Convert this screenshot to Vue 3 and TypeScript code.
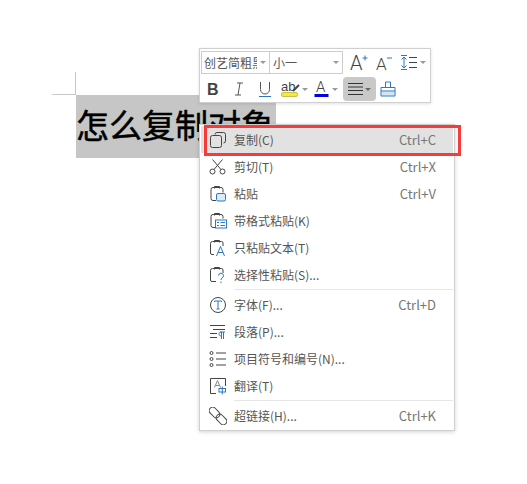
<template>
  <div class="page">
    <div class="crop-mark"></div>
    <h1 class="doc-title">怎么复制对象</h1>

    <div class="toolbar">
      <div class="tool-row">
        <div class="combo">
          <div class="combo-cell font-cell">
            <span class="combo-text font-name">创艺简粗黑</span>
            <i class="caret"></i>
          </div>
          <div class="combo-cell size-cell">
            <span class="combo-text">小一</span>
            <i class="caret"></i>
          </div>
        </div>
        <svg class="tb-icon grow" width="20" height="22" viewBox="0 0 20 22">
          <text x="1" y="18" class="glyph light" font-size="20">A</text>
          <path d="M13.500 6h5M16 3.500v5" stroke="#2a78c4" stroke-width="1" fill="none" />
        </svg>
        <svg class="tb-icon shrink" width="20" height="22" viewBox="0 0 20 22">
          <text x="1" y="18" class="glyph light" font-size="17">A</text>
          <path d="M12 6h5" stroke="#2a78c4" stroke-width="1" fill="none" />
        </svg>
        <svg class="tb-icon spacing" width="19" height="18" viewBox="0 0 19 18">
          <path d="M4 3v11M1.500 5.500 4 3l2.500 2.500M1.500 11.500 4 14l2.500-2.500M1 1.500h6M1 15.500h6" stroke="#2a78c4" fill="none" />
          <path d="M9 3.500h8M9 8.500h8M9 13.500h8" stroke="#444" fill="none" />
        </svg>
        <i class="caret spacing-caret"></i>
      </div>
      <div class="tool-row lower">
        <svg class="tb-icon bold" width="14" height="16" viewBox="0 0 14 16">
          <text x="1" y="14" class="glyph strong" font-size="16">B</text>
        </svg>
        <svg class="tb-icon italic" width="10" height="16" viewBox="0 0 10 16">
          <path d="M3 2h6M1 14h6M6 2 4 14" stroke="#555" fill="none" />
        </svg>
        <svg class="tb-icon under" width="14" height="18" viewBox="0 0 14 18">
          <path d="M2.500 2v7.500a4.500 4.500 0 0 0 9 0V2" stroke="#555" fill="none" />
          <path d="M1 16.500h12" stroke="#2a78c4" fill="none" />
        </svg>
        <svg class="tb-icon mark" width="20" height="18" viewBox="0 0 20 18">
          <text x="0" y="11" class="glyph" font-size="13">ab</text>
          <path d="M12 11 18 5" stroke="#444" stroke-width="2" fill="none" />
          <rect x="0.500" y="12.500" width="16" height="4" rx="1.500" fill="#f7ee1e" stroke="#9a9a40" stroke-width="0.600" />
        </svg>
        <i class="caret mark-caret"></i>
        <svg class="tb-icon color" width="15" height="22" viewBox="0 -2 15 22">
          <text x="2" y="12" class="glyph light" font-size="15">A</text>
          <rect x="0.500" y="14" width="14" height="3" fill="#0000e0" />
        </svg>
        <i class="caret color-caret"></i>
        <div class="align-btn">
          <svg width="15" height="14" viewBox="0 0 15 14">
            <path d="M0 1.500h15M0 5h15M0 8.500h15M0 12.500h15" stroke="#333" fill="none" />
          </svg>
          <i class="caret"></i>
        </div>
        <svg class="tb-icon brush" width="16" height="18" viewBox="0 0 16 18">
          <path d="M1.500 11.500h13v4h-13z" fill="#d4e4f4" />
          <path d="M5.500 7V2h5v5M1 7.500h14v8.500H1zM1 11h14" stroke="#2a78c4" fill="none" />
        </svg>
      </div>
    </div>

    <ul class="menu">
      <template v-for="item in items" :key="item.label">
        <li class="menu-item" :class="{ active: item.active }">
          <svg class="item-icon" width="18" height="18" viewBox="0 0 18 18" fill="none" stroke="#444">
            <template v-if="item.icon === 'copy'">
              <path d="M6 3.500a2 2 0 0 1 2-2h6.500a2 2 0 0 1 2 2V10a2 2 0 0 1-2 2" />
              <rect x="1.500" y="4.500" width="11" height="12" rx="2" />
            </template>
            <template v-else-if="item.icon === 'cut'">
              <circle cx="3.500" cy="13.500" r="2.500" />
              <circle cx="13.500" cy="13.500" r="2.500" />
              <path d="M5 11.500 13.500 1.500M12 11.500 3.500 1.500" />
            </template>
            <template v-else-if="item.icon === 'paste'">
              <path d="M7 15.500H4a2 2 0 0 1-2-2v-9a2 2 0 0 1 2-2h8a2 2 0 0 1 2 2v3" />
              <path d="M5.500 3.500v-2h5v2" />
              <rect x="7.500" y="8.500" width="9" height="7.500" rx="1.500" fill="#dcebf8" stroke="#2a78c4" />
            </template>
            <template v-else-if="item.icon === 'format'">
              <path d="M6 15.500H4a2 2 0 0 1-2-2v-9a2 2 0 0 1 2-2h8a2 2 0 0 1 2 2v2" />
              <path d="M5.500 3.500v-2h5v2" />
              <rect x="6.500" y="8" width="11" height="8" stroke="#2a78c4" />
              <path d="M8 10.500h2M8 13.500h2M11.500 10.500h4.500M11.500 13.500h4.500" stroke="#2a78c4" />
            </template>
            <template v-else-if="item.icon === 'text'">
              <path d="M5 15.500H3a1.500 1.500 0 0 1-1.500-1.500V4.500A2 2 0 0 1 3.500 2.500h9a1.500 1.500 0 0 1 1.500 1.500v3" />
              <path d="M5.500 3.500v-2h5v2" />
              <path d="M7.500 17 11.500 7.500 15.500 17M9 13.500h5" stroke="#2a78c4" />
            </template>
            <template v-else-if="item.icon === 'special'">
              <path d="M7 15.500H3a1.500 1.500 0 0 1-1.500-1.500V4.500a2 2 0 0 1 2-2h9A1.500 1.500 0 0 1 14 4v3" />
              <path d="M5.500 3.500v-2h5v2" />
              <path d="M9.500 9.500a2.500 2.500 0 1 1 3.500 2.500c-.8.400-1 1-1 2M12 15.500v1.500" stroke="#2a78c4" />
            </template>
            <template v-else-if="item.icon === 'font'">
              <circle cx="9" cy="9" r="7.500" />
              <path d="M5.500 6V5h7v1M9 5v8M7.500 13h3" stroke="#2a78c4" />
            </template>
            <template v-else-if="item.icon === 'para'">
              <path d="M1 2.500h15M4 6.500h12M1 10.500h7M1 14.500h7" />
              <path d="M12.500 9v7M14.500 9v7M11 9h5M12.500 13c-2 0-2.500-1-2.500-2s.5-2 2.500-2" stroke="#2a78c4" />
            </template>
            <template v-else-if="item.icon === 'list'">
              <circle cx="2.500" cy="3" r="1.500" />
              <circle cx="2.500" cy="9" r="1.500" />
              <circle cx="2.500" cy="15" r="1.500" />
              <path d="M7 3h10M7 9h10M7 15h10" />
            </template>
            <template v-else-if="item.icon === 'translate'">
              <path d="M7 16.500H1.500v-15h15V9" />
              <path d="M5.500 10.500 8.500 3.500l3 7M6.500 8.500h4" stroke="#888" />
              <rect x="10" y="11.500" width="6.500" height="3.500" stroke="#2a78c4" />
              <path d="M13.250 9.500v8" stroke="#2a78c4" />
            </template>
            <template v-else>
              <rect x="-0.500" y="2" width="12" height="7" rx="3.500" transform="rotate(45 5.500 5.500)" />
              <rect x="6.500" y="9" width="12" height="7" rx="3.500" transform="rotate(45 12.500 12.500)" />
            </template>
          </svg>
          <span class="item-label">{{ item.label }}</span>
          <span v-if="item.shortcut" class="item-key">{{ item.shortcut }}</span>
        </li>
        <li v-if="item.divider" class="menu-divider"></li>
      </template>
    </ul>

    <div class="callout"></div>
  </div>
</template>

<script setup lang="ts">
interface MenuItem {
  label: string
  icon: string
  shortcut?: string
  active?: boolean
  divider?: boolean
}

const items: MenuItem[] = [
  { label: '复制(C)', icon: 'copy', shortcut: 'Ctrl+C', active: true },
  { label: '剪切(T)', icon: 'cut', shortcut: 'Ctrl+X' },
  { label: '粘贴', icon: 'paste', shortcut: 'Ctrl+V' },
  { label: '带格式粘贴(K)', icon: 'format' },
  { label: '只粘贴文本(T)', icon: 'text' },
  { label: '选择性粘贴(S)...', icon: 'special', divider: true },
  { label: '字体(F)...', icon: 'font', shortcut: 'Ctrl+D' },
  { label: '段落(P)...', icon: 'para' },
  { label: '项目符号和编号(N)...', icon: 'list' },
  { label: '翻译(T)', icon: 'translate', divider: true },
  { label: '超链接(H)...', icon: 'link', shortcut: 'Ctrl+K' }
]
</script>

<style>
body {
  background: #fff;
}
</style>

<style scoped>
.page {
  position: relative;
  width: 527px;
  height: 484px;
  overflow: hidden;
  box-sizing: border-box;
  padding-top: 72px;
  background: #fff;
  font-family: "Noto Sans CJK SC", "Noto Sans", sans-serif;
}

.crop-mark {
  width: 24px;
  height: 23px;
  margin-left: 52px;
  box-sizing: border-box;
  border-right: 1px solid #c8c8c8;
  border-bottom: 1px solid #c8c8c8;
}

.doc-title {
  width: 200px;
  height: 63px;
  margin: 0 0 0 76px;
  background: #c6c6c6;
  color: #000;
  font-size: 33px;
  font-weight: 400;
  -webkit-text-stroke: 0.5px #000;
  line-height: 59px;
  white-space: nowrap;
}

.toolbar {
  position: absolute;
  left: 199px;
  top: 48px;
  width: 232px;
  height: 55px;
  box-sizing: border-box;
  padding: 2px 1px;
  background: #fff;
  border: 1px solid #d0d0d0;
  box-shadow: 0 1px 3px rgba(0, 0, 0, 0.12);
}

.tool-row {
  display: flex;
  align-items: center;
  height: 23px;
}

.tool-row.lower {
  height: 24px;
  margin-top: 3px;
}

.combo {
  display: flex;
  width: 142px;
  height: 23px;
  box-sizing: border-box;
  border: 1px solid #ccc;
}

.combo-cell {
  display: flex;
  align-items: center;
  justify-content: space-between;
  box-sizing: border-box;
  padding: 0 3px 0 2px;
}

.font-cell {
  width: 68px;
  border-right: 1px solid #ccc;
}

.size-cell {
  flex: 1;
  padding-left: 3px;
}

.combo-text {
  font-size: 12px;
  color: #555;
  white-space: nowrap;
}

.font-name {
  width: 53px;
  overflow: hidden;
}

.caret {
  display: block;
  flex: none;
  width: 0;
  height: 0;
  border-left: 3px solid transparent;
  border-right: 3px solid transparent;
  border-top: 3px solid #999;
}

.tb-icon {
  display: block;
  flex: none;
}

.glyph {
  font-family: "Liberation Sans", sans-serif;
  fill: #444;
}

.glyph.light {
  font-family: Roboto, "Liberation Sans", sans-serif;
  font-weight: 300;
}

.glyph.strong {
  font-weight: 700;
}

.grow {
  margin-left: 6px;
}

.shrink {
  margin-left: 6px;
}

.spacing {
  margin-left: 5px;
}

.spacing-caret {
  margin-left: 1px;
}

.bold {
  margin-left: 5px;
}

.italic {
  margin-left: 14px;
}

.under {
  margin-left: 14px;
}

.mark {
  margin-left: 9px;
}

.mark-caret {
  margin-left: 1px;
}

.color {
  margin-left: 6px;
}

.color-caret {
  margin-left: 3px;
}

.align-btn {
  display: flex;
  align-items: center;
  justify-content: space-between;
  width: 33px;
  height: 24px;
  margin-left: 5px;
  box-sizing: border-box;
  padding: 0 5px 0 5px;
  border-radius: 4px;
  background: #c9c9c9;
}

.align-btn .caret {
  border-top-color: #666;
}

.brush {
  margin-left: 4px;
}

.menu {
  position: absolute;
  left: 199px;
  top: 124px;
  width: 256px;
  height: 307px;
  margin: 0;
  padding: 1px;
  box-sizing: border-box;
  list-style: none;
  background: #fff;
  border: 1px solid #cfcfcf;
  box-shadow: 0 1px 4px rgba(0, 0, 0, 0.18);
}

.menu-item {
  display: flex;
  align-items: center;
  height: 27px;
  box-sizing: border-box;
  padding: 0 17px 0 8px;
  font-size: 12px;
  color: #555;
}

.menu-item.active {
  background: #e2e2e2;
}

.item-icon {
  flex: none;
  margin-right: 7px;
}

.item-label {
  flex: 1;
  white-space: nowrap;
}

.item-key {
  color: #777;
  font-size: 13px;
}

.menu-divider {
  height: 1px;
  margin: 1px 0 1px 33px;
  background: #e6e6e6;
}

.callout {
  position: absolute;
  left: 204px;
  top: 125px;
  width: 257px;
  height: 31px;
  box-sizing: border-box;
  border: 3px solid #f73a3a;
}
</style>
